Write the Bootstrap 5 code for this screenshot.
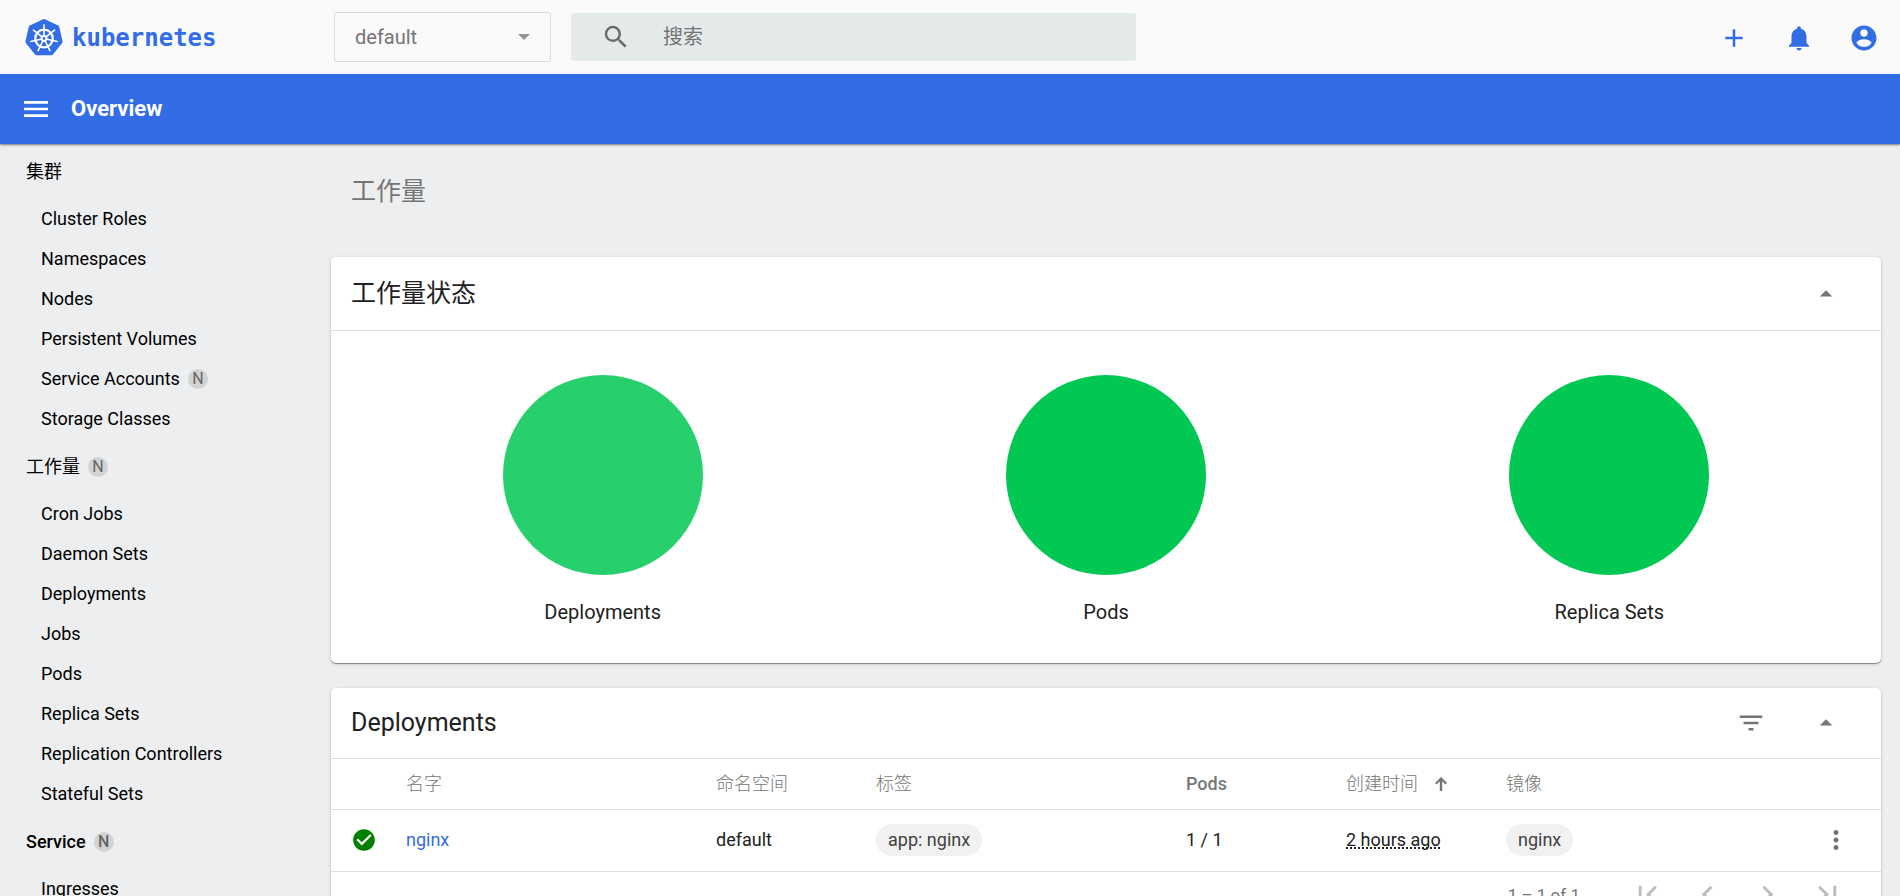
<!DOCTYPE html>
<html lang="zh-CN">
<head>
<meta charset="utf-8">
<meta name="viewport" content="width=device-width, initial-scale=1">
<title>Overview - Kubernetes Dashboard</title>
<link href="https://cdn.jsdelivr.net/npm/bootstrap@5.3.0/dist/css/bootstrap.min.css" rel="stylesheet">
<style>
  :root { --kd-blue: #326de6; --kd-muted: #757575; --kd-line: #e0e0e0; }
  body { font-family: Roboto, "Noto Sans CJK SC", sans-serif; font-size: 18px; line-height: 24px; color: #212121; background: #eceeef; }
  svg { display: block; fill: currentColor; flex: none; }
  .icon-md { width: 30px; height: 30px; }
  .icon-lg { width: 35px; height: 35px; }
  .kd-shell { height: 100vh; }
  .kd-body { min-height: 0; }
  .kd-side, .kd-main { overflow-y: auto; scrollbar-width: none; }
  .kd-side::-webkit-scrollbar, .kd-main::-webkit-scrollbar { display: none; }
  .kd-icon-btn { border: 0; background: none; padding: 0; color: inherit; display: flex; align-items: center; justify-content: center; }

  .kd-top { height: 74px; background: #fafafa; }
  .kd-brand { width: 334px; padding: 2px 0 0 24px; color: var(--kd-blue); gap: 8px; }
  .kd-brand span { font: 700 24px/32px "DejaVu Sans Mono", monospace; }
  .kd-namespace { width: 217px; height: 50px; margin-right: 20px; padding: 0 20px; border: 1px solid #dadada; border-radius: 3px; font-size: 20px; color: var(--kd-muted);
    appearance: none; background: url("data:image/svg+xml,%3Csvg xmlns='http://www.w3.org/2000/svg' width='12' height='6'%3E%3Cpath fill='%23949494' d='M0 0h12L6 6z'/%3E%3C/svg%3E") no-repeat right 20px center; }
  .kd-search { width: 565px; height: 48px; background: #e4e9e9; border-radius: 3px; padding-left: 30px; color: #6b6b6b; }
  .kd-search input { border: 0; background: none; outline: 0; margin-left: 30px; font-size: 20px; }
  .kd-search input::placeholder { color: #757575; opacity: 1; }
  .kd-actions { gap: 35px; padding: 2px 21px 0 0; color: var(--kd-blue); }

  .kd-bar { height: 70px; background: var(--kd-blue); box-shadow: 0 1px 2px rgba(0,0,0,.5); padding-left: 20px; z-index: 1; }
  .kd-bar h1 { font-size: 22px; line-height: 30px; font-weight: 700; margin: 0 0 0 19px; }

  .kd-side { width: 311px; color: #000; }
  .kd-side h2 { height: 55px; padding-left: 26px; margin: 0; font-size: 18px; font-weight: 500; display: flex; align-items: center; }
  .kd-side h2.kd-zh { font-weight: 400; }
  .kd-side a { height: 40px; padding-left: 41px; color: #000; text-decoration: none; display: flex; align-items: center; }
  .kd-side a.kd-group { padding: 0; }
  .kd-scope { width: 20px; height: 20px; border-radius: 50%; background: #d2d3d4; color: #666; font-size: 16px; line-height: 20px; text-align: center; margin-left: 8px; }

  .kd-main { padding: 0 19px 40px 20px; }
  .kd-page-title { font-size: 25px; line-height: 30px; color: #757575; margin: 0; padding: 33px 20px 50px; font-weight: 400; }
  .kd-card { background: #fff; border-radius: 5px; box-shadow: 0 1px 1px rgba(0,0,0,.4), 0 1px 4px rgba(0,0,0,.14); margin-bottom: 25px; }
  .kd-card-head { height: 71px; border-bottom: 1px solid var(--kd-line); padding: 0 40px 0 20px; gap: 45px; color: var(--kd-muted); }
  .kd-card-head.kd-tall { height: 74px; }
  .kd-card-head h2 { font-size: 25px; line-height: 30px; margin: 0; color: #212121; font-weight: 400; }
  .kd-charts { padding: 44px 20px 39px; }
  .kd-pie { width: 200px; height: 200px; border-radius: 50%; background: #00c853; }
  .kd-pie.kd-active { background: #28d06d; }
  .kd-charts p { font-size: 20px; line-height: 24px; margin: 25px 0 0; }
  .kd-grid { table-layout: fixed; width: 100%; }
  .kd-grid th, .kd-grid td { padding: 0; border-bottom: 1px solid var(--kd-line); }
  .kd-grid th { height: 50px; color: var(--kd-muted); font-weight: 500; }
  .kd-grid th.kd-zh { font-weight: 300; }
  .kd-grid td { height: 62px; }
  .kd-grid td a { color: var(--kd-blue); text-decoration: none; }
  .kd-w-status { width: 75px; } .kd-w-narrow { width: 160px; } .kd-w-menu { width: 65px; }
  .kd-sort { gap: 14px; }
  .kd-ok { width: 26px; height: 26px; margin-left: 20px; color: green; }
  .kd-more { margin-left: 5px; color: var(--kd-muted); }
  .kd-chip { display: inline-block; height: 32px; line-height: 32px; border-radius: 16px; background: #f1f1f1; padding: 0 12px; color: #424242; vertical-align: middle; }
  .kd-ago { text-decoration: underline dotted 2px; text-underline-offset: 1px; text-decoration-skip-ink: none; }
  .kd-pager { height: 46px; color: #757575; padding-right: 36px; gap: 25px; }
  .kd-pager .kd-icon-btn { color: #bdbdbd; }
  .kd-pager output { margin-right: 25px; font-size: 17px; }
</style>
</head>
<body>
<div class="kd-shell d-flex flex-column overflow-hidden">
  <header class="kd-top d-flex align-items-center flex-shrink-0">
    <a href="#" class="kd-brand d-flex align-items-center text-decoration-none flex-shrink-0">
      <svg width="40" height="40" viewBox="0 0 40 40" aria-hidden="true">
        <path d="M20 3 33.3 9.4 36.6 23.8 27.4 35.3H12.6L3.4 23.8 6.7 9.4Z" stroke="currentColor" stroke-width="4" stroke-linejoin="round"/>
        <g fill="none" stroke="#fff" stroke-width="1.6" stroke-linecap="round">
          <circle cx="20" cy="20.5" r="8.8" stroke-width="2.2"/>
          <path id="spoke" d="M20 18V7"/>
          <use href="#spoke" transform="rotate(51.43 20 20.5)"/>
          <use href="#spoke" transform="rotate(102.86 20 20.5)"/>
          <use href="#spoke" transform="rotate(154.29 20 20.5)"/>
          <use href="#spoke" transform="rotate(205.71 20 20.5)"/>
          <use href="#spoke" transform="rotate(257.14 20 20.5)"/>
          <use href="#spoke" transform="rotate(308.57 20 20.5)"/>
          <circle cx="20" cy="20.5" r="2.4" stroke-width="2"/>
        </g>
      </svg>
      <span>kubernetes</span>
    </a>
    <select class="kd-namespace flex-shrink-0" aria-label="Namespace"><option>default</option></select>
    <label class="kd-search d-flex align-items-center">
      <svg class="icon-md" viewBox="0 0 24 24"><path d="M15.5 14h-.79l-.28-.27A6.471 6.471 0 0 0 16 9.5 6.5 6.5 0 1 0 9.5 16c1.61 0 3.09-.59 4.23-1.57l.27.28v.79l5 4.99L20.49 19l-4.99-5zm-6 0C7.01 14 5 11.99 5 9.5S7.01 5 9.5 5 14 7.01 14 9.5 11.99 14 9.5 14z"/></svg>
      <input type="text" class="flex-grow-1" placeholder="搜索" aria-label="搜索">
    </label>
    <div class="kd-actions d-flex ms-auto">
      <button type="button" class="kd-icon-btn" aria-label="Create"><svg class="icon-md" viewBox="0 0 24 24"><path d="M19 13h-6v6h-2v-6H5v-2h6V5h2v6h6v2z"/></svg></button>
      <button type="button" class="kd-icon-btn" aria-label="Notifications"><svg class="icon-md" viewBox="0 0 24 24"><path d="M12 22c1.1 0 2-.9 2-2h-4c0 1.1.89 2 2 2zm6-6v-5c0-3.07-1.64-5.64-4.5-6.32V4c0-.83-.67-1.5-1.5-1.5s-1.5.67-1.5 1.5v.68C7.63 5.36 6 7.92 6 11v5l-2 2v1h16v-1l-2-2z"/></svg></button>
      <button type="button" class="kd-icon-btn" aria-label="User"><svg class="icon-md" viewBox="0 0 24 24"><path d="M12 2C6.48 2 2 6.48 2 12s4.48 10 10 10 10-4.48 10-10S17.52 2 12 2zm0 3c1.66 0 3 1.34 3 3s-1.34 3-3 3-3-1.34-3-3 1.34-3 3-3zm0 14.2c-2.5 0-4.71-1.28-6-3.22.03-1.99 4-3.08 6-3.08 1.99 0 5.97 1.09 6 3.08-1.29 1.94-3.5 3.22-6 3.22z"/></svg></button>
    </div>
  </header>

  <div class="kd-bar d-flex align-items-center text-white flex-shrink-0">
    <button type="button" class="kd-icon-btn" aria-label="Menu"><svg width="32" height="32" viewBox="0 0 24 24"><path d="M3 18h18v-2H3v2zm0-5h18v-2H3v2zm0-7v2h18V6H3z"/></svg></button>
    <h1>Overview</h1>
  </div>

  <div class="kd-body d-flex flex-grow-1">
    <nav class="kd-side flex-shrink-0">
      <h2 class="kd-zh"><a href="#" class="kd-group">集群</a></h2>
      <a href="#">Cluster Roles</a>
      <a href="#">Namespaces</a>
      <a href="#">Nodes</a>
      <a href="#">Persistent Volumes</a>
      <a href="#">Service Accounts <span class="kd-scope">N</span></a>
      <a href="#">Storage Classes</a>
      <h2 class="kd-zh"><a href="#" class="kd-group">工作量 <span class="kd-scope">N</span></a></h2>
      <a href="#">Cron Jobs</a>
      <a href="#">Daemon Sets</a>
      <a href="#">Deployments</a>
      <a href="#">Jobs</a>
      <a href="#">Pods</a>
      <a href="#">Replica Sets</a>
      <a href="#">Replication Controllers</a>
      <a href="#">Stateful Sets</a>
      <h2><a href="#" class="kd-group">Service <span class="kd-scope">N</span></a></h2>
      <a href="#">Ingresses</a>
    </nav>

    <main class="kd-main flex-grow-1">
      <h2 class="kd-page-title">工作量</h2>

      <section class="kd-card">
        <div class="kd-card-head kd-tall d-flex align-items-center">
          <h2 class="me-auto">工作量状态</h2>
          <button type="button" class="kd-icon-btn" aria-label="Collapse"><svg class="icon-md" viewBox="0 0 24 24"><path d="M7 14l5-5 5 5z"/></svg></button>
        </div>
        <div class="kd-charts row g-0">
          <div class="col d-flex flex-column align-items-center"><div class="kd-pie kd-active"></div><p>Deployments</p></div>
          <div class="col d-flex flex-column align-items-center"><div class="kd-pie"></div><p>Pods</p></div>
          <div class="col d-flex flex-column align-items-center"><div class="kd-pie"></div><p>Replica Sets</p></div>
        </div>
      </section>

      <section class="kd-card">
        <div class="kd-card-head d-flex align-items-center">
          <h2 class="me-auto">Deployments</h2>
          <button type="button" class="kd-icon-btn" aria-label="Filter"><svg class="icon-md" viewBox="0 0 24 24"><path d="M10 18h4v-2h-4v2zM3 6v2h18V6H3zm3 7h12v-2H6v2z"/></svg></button>
          <button type="button" class="kd-icon-btn" aria-label="Collapse"><svg class="icon-md" viewBox="0 0 24 24"><path d="M7 14l5-5 5 5z"/></svg></button>
        </div>
        <table class="kd-grid">
          <thead>
            <tr>
              <th class="kd-w-status"></th>
              <th class="kd-zh">名字</th>
              <th class="kd-zh kd-w-narrow">命名空间</th>
              <th class="kd-zh">标签</th>
              <th class="kd-w-narrow">Pods</th>
              <th class="kd-zh kd-w-narrow"><span class="kd-sort d-flex align-items-center">创建时间<svg width="18" height="18" viewBox="0 0 18 18"><path d="M9 2 15 8 13.500 9.500 10.200 6.300V16H7.800V6.300L4.500 9.500 3 8Z"/></svg></span></th>
              <th class="kd-zh">镜像</th>
              <th class="kd-w-menu"></th>
            </tr>
          </thead>
          <tbody>
            <tr>
              <td><svg class="kd-ok" viewBox="0 0 24 24"><path d="M12 2C6.480 2 2 6.480 2 12s4.480 10 10 10 10-4.480 10-10S17.520 2 12 2zm-2 15l-5-5 1.410-1.410L10 14.170l7.590-7.590L19 8l-9 9z"/></svg></td>
              <td><a href="#">nginx</a></td>
              <td>default</td>
              <td><span class="kd-chip">app: nginx</span></td>
              <td>1 / 1</td>
              <td><span class="kd-ago">2 hours ago</span></td>
              <td><span class="kd-chip">nginx</span></td>
              <td><button type="button" class="kd-icon-btn kd-more" aria-label="Actions"><svg class="icon-md" viewBox="0 0 24 24"><path d="M12 8c1.100 0 2-.9 2-2s-.9-2-2-2-2 .9-2 2 .9 2 2 2zm0 2c-1.100 0-2 .9-2 2s.9 2 2 2 2-.9 2-2-.9-2-2-2zm0 6c-1.100 0-2 .9-2 2s.9 2 2 2 2-.9 2-2-.9-2-2-2z"/></svg></button></td>
            </tr>
          </tbody>
        </table>
        <div class="kd-pager d-flex align-items-center justify-content-end">
          <output>1 – 1 of 1</output>
          <button type="button" class="kd-icon-btn" aria-label="First page"><svg class="icon-lg" viewBox="0 0 24 24"><path d="M18.410 16.590L13.820 12l4.590-4.590L17 6l-6 6 6 6zM6 6h2v12H6z"/></svg></button>
          <button type="button" class="kd-icon-btn" aria-label="Previous page"><svg class="icon-lg" viewBox="0 0 24 24"><path d="M15.410 7.410L14 6l-6 6 6 6 1.410-1.410L10.830 12z"/></svg></button>
          <button type="button" class="kd-icon-btn" aria-label="Next page"><svg class="icon-lg" viewBox="0 0 24 24"><path d="M10 6L8.590 7.410 13.170 12l-4.580 4.590L10 18l6-6z"/></svg></button>
          <button type="button" class="kd-icon-btn" aria-label="Last page"><svg class="icon-lg" viewBox="0 0 24 24"><path d="M5.590 7.410L10.180 12l-4.590 4.590L7 18l6-6-6-6zM16 6h2v12h-2z"/></svg></button>
        </div>
      </section>
    </main>
  </div>
</div>
<script src="https://cdn.jsdelivr.net/npm/bootstrap@5.3.0/dist/js/bootstrap.bundle.min.js"></script>
</body>
</html>
